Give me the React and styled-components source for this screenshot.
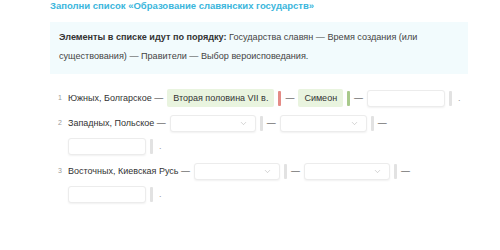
import React from 'react';
import styled, { createGlobalStyle } from 'styled-components';
import { ChevronDown } from 'lucide-react';

const GlobalStyle = createGlobalStyle`
  html, body {
    margin: 0;
    padding: 0;
    background: #ffffff;
  }
  body {
    font-family: "Liberation Sans", Arial, sans-serif;
    color: #333333;
  }
`;

const Page = styled.div`
  width: 500px;
  height: 250px;
  padding: 0 32px 0 50px;
  box-sizing: border-box;
  overflow: hidden;
`;

const Title = styled.div`
  font-size: 9.5px;
  font-weight: bold;
  color: #3bb6dc;
  line-height: 12px;
  height: 22px;
`;

const InfoBox = styled.div`
  background: #f2fbfd;
  padding: 6px 9px 8px;
  font-size: 9.1px;
  line-height: 19px;
  color: #444;
`;

const Bold = styled.b`
  color: #333;
`;

const List = styled.div`
  display: flex;
  flex-direction: column;
  gap: 7px;
  padding-top: 15px;
`;

const Row = styled.div`
  display: flex;
  align-items: flex-start;
`;

const Num = styled.div`
  width: 18px;
  padding-left: 8px;
  box-sizing: border-box;
  font-size: 7px;
  line-height: 18px;
  color: #9a9a9a;
`;

const Items = styled.div`
  flex: 1;
  display: flex;
  flex-wrap: wrap;
  align-items: center;
  column-gap: 4px;
  row-gap: 5px;
  font-size: 9px;
  line-height: 18px;
  color: #333;
`;

const Group = styled.span`
  display: flex;
  align-items: center;
  gap: 4px;
`;

const Text = styled.span`
  white-space: nowrap;
`;

const Chip = styled.span`
  background: #e9f4df;
  border-radius: 2px;
  padding: 0 6px;
  height: 18px;
  white-space: nowrap;
`;

const Bar = styled.span`
  width: 3px;
  height: 15px;
  border-radius: 1px;
  background: ${p => (p.$state === 'wrong' ? '#e48b86' : p.$state === 'right' ? '#a8c98b' : '#e2e2e2')};
`;

const Input = styled.span`
  width: ${p => p.$w || 78}px;
  height: 17px;
  box-sizing: border-box;
  background: #fff;
  border: 1px solid #ececec;
  border-radius: 3px;
  box-shadow: 0 1px 2px rgba(0, 0, 0, 0.06);
  display: flex;
  align-items: center;
  justify-content: flex-end;
  padding-right: 7px;
  color: #b4b4b4;
`;

const Dot = styled.span`
  color: #999;
  padding-left: 2px;
`;

const Select = ({ w }) => (
  <Input $w={w}>
    <ChevronDown size={9} strokeWidth={1.5} />
  </Input>
);

const LastField = () => (
  <Group>
    <Input />
    <Bar />
    <Dot>.</Dot>
  </Group>
);

const App = () => (
  <Page>
    <GlobalStyle />
    <Title>Заполни список «Образование славянских государств»</Title>
    <InfoBox>
      <Bold>Элементы в списке идут по порядку:</Bold> Государства славян — Время создания (или
      существования) — Правители — Выбор вероисповедания.
    </InfoBox>
    <List>
      <Row>
        <Num>1</Num>
        <Items>
          <Text>Южных, Болгарское —</Text>
          <Chip>Вторая половина VII в.</Chip>
          <Bar $state="wrong" />
          <Text>—</Text>
          <Chip>Симеон</Chip>
          <Bar $state="right" />
          <Text>—</Text>
          <LastField />
        </Items>
      </Row>
      <Row>
        <Num>2</Num>
        <Items>
          <Text>Западных, Польское —</Text>
          <Select w={86} />
          <Bar />
          <Text>—</Text>
          <Select w={87} />
          <Bar />
          <Text>—</Text>
          <LastField />
        </Items>
      </Row>
      <Row>
        <Num>3</Num>
        <Items>
          <Text>Восточных, Киевская Русь —</Text>
          <Select w={86} />
          <Bar />
          <Text>—</Text>
          <Select w={86} />
          <Bar />
          <Text>—</Text>
          <LastField />
        </Items>
      </Row>
    </List>
  </Page>
);

export default App;
